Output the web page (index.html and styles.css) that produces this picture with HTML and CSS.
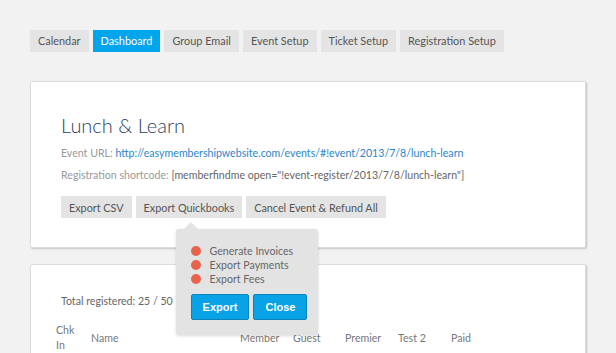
FILE: index.html
```html
<!DOCTYPE html>
<html lang="en">
<head>
    <meta charset="UTF-8">
    <title>Lunch &amp; Learn - Dashboard</title>
    <link rel="stylesheet" href="styles.css">
</head>
<body>
    <div class="page">
        <div class="tabs">
            <a class="tab">Calendar</a>
            <a class="tab active">Dashboard</a>
            <a class="tab">Group Email</a>
            <a class="tab">Event Setup</a>
            <a class="tab">Ticket Setup</a>
            <a class="tab">Registration Setup</a>
        </div>

        <div class="card event-card">
            <h1>Lunch &amp; Learn</h1>
            <p class="info">Event URL: <a href="#">http://easymembershipwebsite.com/events/#!event/2013/7/8/lunch-learn</a></p>
            <p class="info">Registration shortcode: <span class="code">[memberfindme open="!event-register/2013/7/8/lunch-learn"]</span></p>
            <div class="actions">
                <button class="btn">Export CSV</button>
                <div class="drop">
                    <button class="btn">Export Quickbooks</button>
                    <!-- quickbooks export popup -->
                    <div class="popup">
                        <ul>
                            <li><span class="dot"></span>Generate Invoices</li>
                            <li><span class="dot"></span>Export Payments</li>
                            <li><span class="dot"></span>Export Fees</li>
                        </ul>
                        <div class="popup-buttons">
                            <button class="blue">Export</button>
                            <button class="blue">Close</button>
                        </div>
                    </div>
                </div>
                <button class="btn">Cancel Event &amp; Refund All</button>
            </div>
        </div>

        <div class="card list-card">
            <p class="total">Total registered: 25 / 50</p>
            <table>
                <thead>
                    <tr>
                        <th class="col-chk">Chk<br>In</th>
                        <th class="col-name">Name</th>
                        <th class="col-member">Member</th>
                        <th class="col-guest">Guest</th>
                        <th class="col-premier">Premier</th>
                        <th class="col-test">Test 2</th>
                        <th class="col-paid">Paid</th>
                    </tr>
                </thead>
            </table>
        </div>
    </div>
</body>
</html>
```

FILE: styles.css
```css
body {
    margin: 0;
    background-color: #f2f2f2;
    font-family: Lato, 'Liberation Sans', sans-serif;
    font-size: 10.6px;
    color: #555;
}
.page {
    padding: 30px 30px 0;
}
.tabs {
    display: flex;
    gap: 4px;
}
.tab {
    display: block;
    height: 22px;
    line-height: 22px;
    padding: 0 8px;
    background-color: #e4e4e4;
    color: #555;
    font-size: 10.9px;
}
.tab.active {
    background-color: #00a5ec;
    color: #fff;
}
.card {
    background: #fff;
    border: 1px solid #dcdcdc;
    border-radius: 2px;
    box-shadow: 1px 1px 2px rgba(0, 0, 0, 0.2);
}
.event-card {
    margin-top: 29px;
    padding: 30px 30px 29px;
}
h1 {
    margin: 0 0 8px;
    font-size: 20px;
    font-weight: 300;
    color: #2e3f5e;
    line-height: 26px;
}
.info {
    margin: 0 0 8px;
    line-height: 14px;
    color: #999;
}
.info a {
    color: #2a86c8;
    text-decoration: none;
}
.info .code {
    color: #666;
}
.actions {
    display: flex;
    gap: 4px;
    margin-top: 14px;
}
.btn {
    height: 22px;
    padding: 0 8px;
    border: none;
    background-color: #e4e4e4;
    color: #555;
    font-family: inherit;
    font-size: 10.8px;
}
.drop {
    position: relative;
}
.popup {
    position: absolute;
    top: 33px;
    left: 40px;
    width: 126px;
    padding: 15px 8px 15px;
    background-color: #e3e3e3;
    border-radius: 3px;
    box-shadow: 0 1px 3px rgba(0, 0, 0, 0.15);
    z-index: 5;
}
.popup::before {
    content: "";
    position: absolute;
    top: -7px;
    left: 8px;
    border-left: 7px solid transparent;
    border-right: 7px solid transparent;
    border-bottom: 7px solid #e3e3e3;
}
.popup ul {
    list-style: none;
    margin: 0 0 0 7px;
    padding: 0;
}
.popup li {
    display: flex;
    align-items: center;
    height: 14px;
    color: #666;
}
.dot {
    width: 10px;
    height: 10px;
    border-radius: 50%;
    background-color: #e8634b;
    margin-right: 9px;
}
.popup-buttons {
    display: flex;
    gap: 4px;
    margin-top: 8px;
    margin-left: 7px;
}
.blue {
    height: 26px;
    padding: 0 11px;
    border: 1px solid #0c82b8;
    border-radius: 2px;
    background-color: #0aa2e6;
    color: #fff;
    font-family: 'Liberation Sans', Arial, sans-serif;
    font-weight: bold;
    font-size: 11px;
}
.list-card {
    margin-top: 16px;
    padding: 30px 25px 0;
    height: 100px;
}
.total {
    margin: 0 0 16px 5px;
    color: #666;
}
table {
    border-collapse: collapse;
}
th {
    font-weight: normal;
    text-align: left;
    color: #777;
    line-height: 15px;
    padding: 0 0 4px;
    border-bottom: 1px dotted #ccc;
}
.col-chk { width: 35px; }
.col-name { width: 149px; }
.col-member { width: 53px; }
.col-guest { width: 52px; }
.col-premier { width: 53px; }
.col-test { width: 53px; }
.col-paid { width: 38px; }
```
